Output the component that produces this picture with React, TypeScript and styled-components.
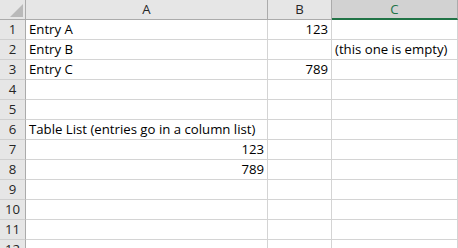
import { Fragment } from 'react';
import styled, { createGlobalStyle } from 'styled-components';

const GlobalStyle = createGlobalStyle`
  html, body {
    margin: 0;
    padding: 0;
    background: #ffffff;
    overflow: hidden;
  }
  body {
    font-family: "Open Sans", "Liberation Sans", sans-serif;
  }
`;

const Sheet = styled.div`
  display: grid;
  grid-template-columns: 26px 242px 64px 126px;
  grid-auto-rows: 20px;
  width: 458px;
  height: 248px;
  overflow: hidden;
  font-size: 13.2px;
  color: #000;
`;

const Corner = styled.div`
  position: relative;
  background: #e6e6e6;
  border-right: 1px solid #ababab;
  border-bottom: 1px solid #ababab;
  box-sizing: border-box;

  svg {
    position: absolute;
    right: 2px;
    bottom: 2px;
  }
`;

const ColHeader = styled.div<{ $selected?: boolean }>`
  display: flex;
  align-items: flex-end;
  justify-content: center;
  padding-bottom: ${p => (p.$selected ? '1px' : '2px')};
  box-sizing: border-box;
  background: ${p => (p.$selected ? '#d2d2d2' : '#e6e6e6')};
  color: ${p => (p.$selected ? '#217346' : '#262626')};
  border-right: 1px solid #ababab;
  border-bottom: ${p => (p.$selected ? '2px solid #217346' : '1px solid #ababab')};
  line-height: 16px;
`;

const RowHeader = styled.div`
  display: flex;
  align-items: flex-end;
  justify-content: center;
  padding-bottom: 2px;
  box-sizing: border-box;
  background: #e6e6e6;
  color: #262626;
  border-right: 1px solid #ababab;
  border-bottom: 1px solid #cfcfcf;
  line-height: 16px;
`;

const Cell = styled.div<{ $align?: 'left' | 'right' }>`
  display: flex;
  align-items: flex-end;
  justify-content: ${p => (p.$align === 'right' ? 'flex-end' : 'flex-start')};
  padding: 0 3px 2px 3px;
  box-sizing: border-box;
  border-right: 1px solid #d4d4d4;
  border-bottom: 1px solid #d4d4d4;
  white-space: nowrap;
  overflow: visible;
  line-height: 16px;
  min-width: 0;
`;

type CellValue = { text: string; align?: 'left' | 'right' };

const rows: CellValue[][] = [
  [{ text: 'Entry A' }, { text: '123', align: 'right' }, { text: '' }],
  [{ text: 'Entry B' }, { text: '' }, { text: '(this one is empty)' }],
  [{ text: 'Entry C' }, { text: '789', align: 'right' }, { text: '' }],
  [{ text: '' }, { text: '' }, { text: '' }],
  [{ text: '' }, { text: '' }, { text: '' }],
  [{ text: 'Table List (entries go in a column list)' }, { text: '' }, { text: '' }],
  [{ text: '123', align: 'right' }, { text: '' }, { text: '' }],
  [{ text: '789', align: 'right' }, { text: '' }, { text: '' }],
  [{ text: '' }, { text: '' }, { text: '' }],
  [{ text: '' }, { text: '' }, { text: '' }],
  [{ text: '' }, { text: '' }, { text: '' }],
  [{ text: '' }, { text: '' }, { text: '' }],
];

const CornerTriangle = () => (
  <svg width="13" height="13" viewBox="0 0 13 13">
    <polygon points="13,0 13,13 0,13" fill="#b9b9b9" />
  </svg>
);

export default function App() {
  return (
    <>
      <GlobalStyle />
      <Sheet>
        <Corner>
          <CornerTriangle />
        </Corner>
        <ColHeader>A</ColHeader>
        <ColHeader>B</ColHeader>
        <ColHeader $selected>C</ColHeader>
        {rows.map((row, i) => (
          <Fragment key={i}>
            <RowHeader>{i + 1}</RowHeader>
            {row.map((c, j) => (
              <Cell key={j} $align={c.align}>
                {c.text}
              </Cell>
            ))}
          </Fragment>
        ))}
      </Sheet>
    </>
  );
}
